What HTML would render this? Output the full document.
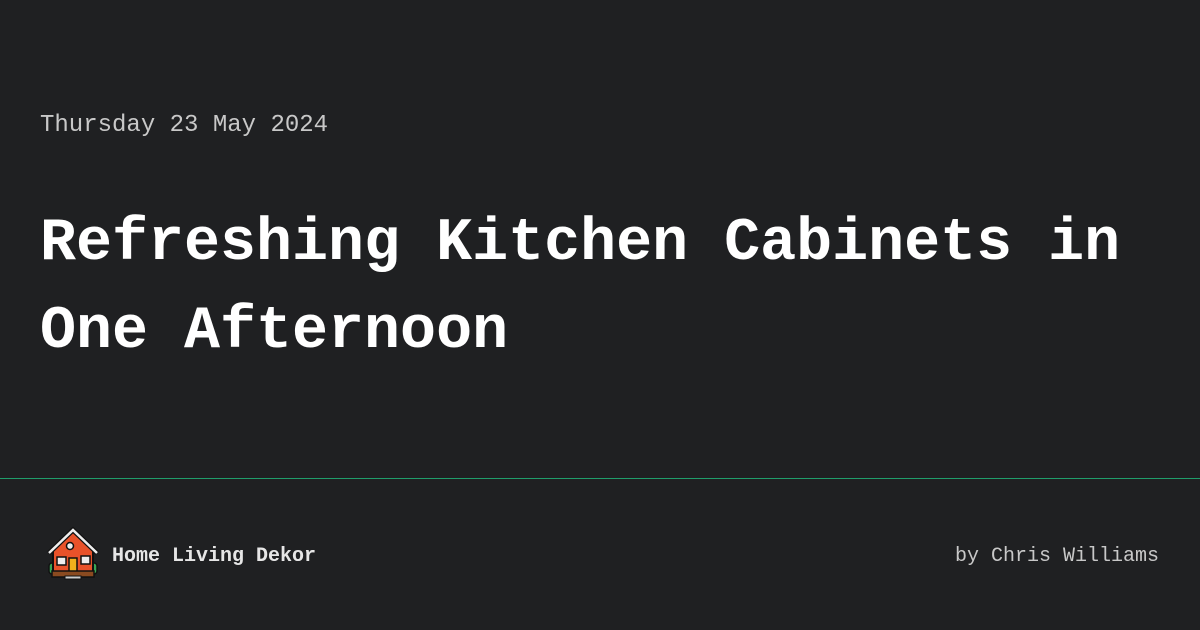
<!DOCTYPE html>
<html><head><meta charset="utf-8"><style>
html,body{margin:0;padding:0}
body{width:1200px;height:630px;background:#1f2022;position:relative;overflow:hidden;font-family:"Liberation Mono",monospace;color:#fff}
.date{position:absolute;left:40px;top:110px;font-size:24px;line-height:32px;color:#c8c8c8}
.title{position:absolute;left:40px;top:200px;font-size:60px;line-height:88px;font-weight:bold;width:1150px}
.line{position:absolute;left:0;top:478px;width:1200px;height:1px;background:#1f9d6b}
.brand{position:absolute;left:112px;top:544px;font-size:20px;line-height:26px;font-weight:bold;color:#e6e6e6}
.by{position:absolute;right:41px;top:544px;font-size:20px;line-height:26px;color:#c8c8c8}
svg{position:absolute;left:46px;top:526px}
</style></head><body>
<div class="date">Thursday 23 May 2024</div>
<div class="title">Refreshing Kitchen Cabinets in One Afternoon</div>
<div class="line"></div>
<svg width="54" height="56" viewBox="0 0 54 56">
<rect x="3" y="37" width="8" height="11" rx="3" fill="#3aa655" stroke="#111" stroke-width="1.5"/>
<rect x="43" y="37" width="8" height="11" rx="3" fill="#3aa655" stroke="#111" stroke-width="1.5"/>
<polygon points="7,24 27,6 47,24 47,47 7,47" fill="#e8522a" stroke="#111" stroke-width="2"/>
<polyline points="3,27 27,4 51,27" fill="none" stroke="#111" stroke-width="5"/>
<polyline points="3,27 27,4 51,27" fill="none" stroke="#eee" stroke-width="2.5"/>
<circle cx="24" cy="20" r="3.5" fill="#eee" stroke="#111" stroke-width="1.5"/>
<rect x="11" y="31" width="9" height="8" fill="#eee" stroke="#111" stroke-width="1.5"/>
<rect x="35" y="30" width="9" height="8" fill="#eee" stroke="#111" stroke-width="1.5"/>
<rect x="23" y="32" width="8" height="15" fill="#f2b01c" stroke="#111" stroke-width="1.5"/>
<rect x="6" y="45" width="42" height="6" fill="#8a4a20" stroke="#111" stroke-width="1.5"/>
<rect x="19" y="50" width="16" height="3" fill="#ccc" stroke="#111" stroke-width="1"/>
</svg>
<div class="brand">Home Living Dekor</div>
<div class="by">by Chris Williams</div>
</body></html>
